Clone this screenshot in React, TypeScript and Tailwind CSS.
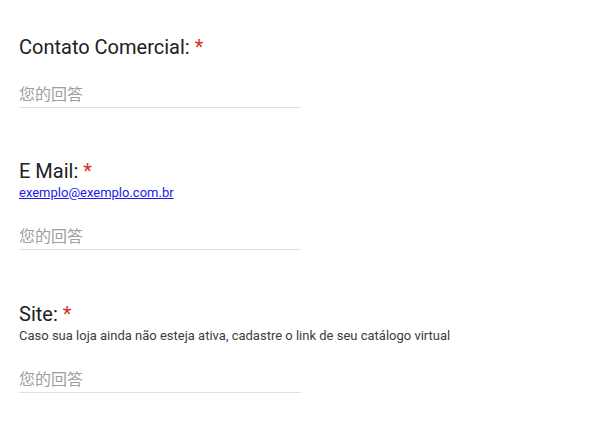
export default function App() {
  const fields = [
    { title: "Contato Comercial:", gap: "" },
    {
      title: "E Mail:",
      gap: "mt-[51px]",
      desc: (
        <a href="#" className="text-[#1a1aee] underline">
          exemplo@exemplo.com.br
        </a>
      ),
    },
    {
      title: "Site:",
      gap: "mt-[52px]",
      desc: (
        <span className="text-[#3c3c3c]">
          Caso sua loja ainda não esteja ativa, cadastre o link de seu catálogo virtual
        </span>
      ),
    },
  ];

  return (
    <div className="w-[613px] h-[426px] overflow-hidden bg-white pt-[35px] pl-[19px] font-['Roboto','Noto_Sans_CJK_SC',sans-serif]">
      {fields.map((f) => (
        <div key={f.title} className={f.gap}>
          {/* Question title */}
          <div className="text-[20px] leading-[24px] text-[#202124]">
            {f.title} <span className="text-[#d93025]">*</span>
          </div>

          {/* Help text */}
          {f.desc && <div className="text-[13px] leading-[20px]">{f.desc}</div>}

          {/* Answer line */}
          <div
            className={`${
              f.desc ? "mt-[21px]" : "mt-[23px]"
            } w-[282px] h-[26px] pt-[1px] border-b border-[#e0e0e0] text-[16px] leading-[24px] text-[#9e9e9e]`}
          >
            您的回答
          </div>
        </div>
      ))}
    </div>
  );
}
